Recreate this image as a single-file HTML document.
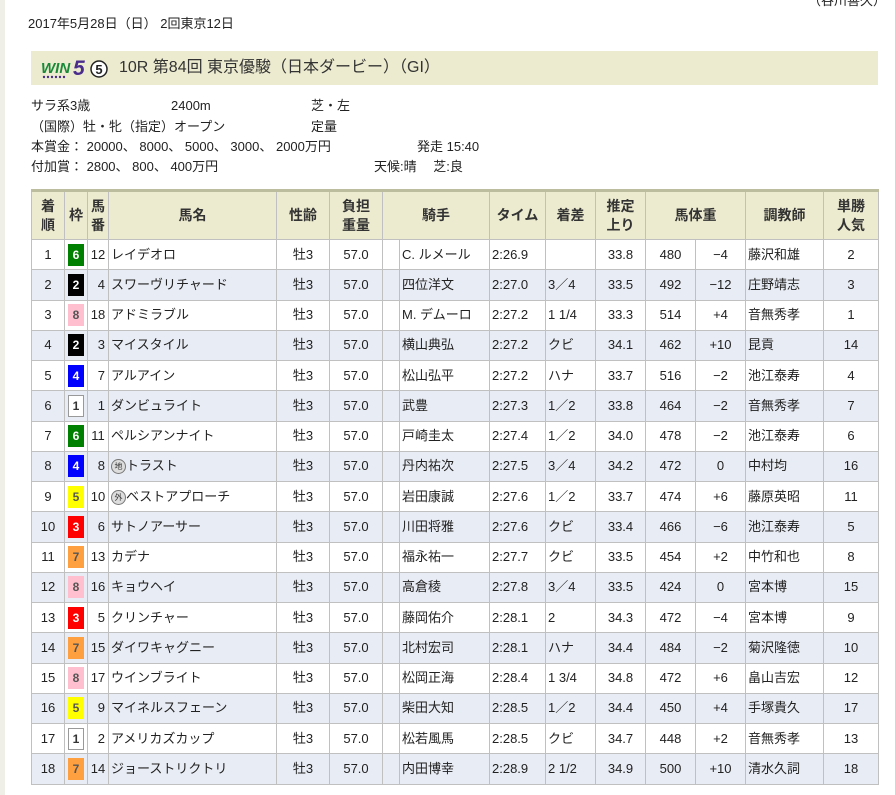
<!DOCTYPE html>
<html><head><meta charset="utf-8">
<style>
body{margin:0;width:895px;height:795px;background:#fff;position:relative;overflow:hidden;font-family:"Liberation Sans","Noto Sans CJK JP",sans-serif;color:#222;font-size:13px}
.strip{position:absolute;left:0;top:0;width:5px;height:795px;background:#efefe7}
.tr{position:absolute;left:808px;top:-8px;font-size:13px;line-height:18px}
.date{position:absolute;left:28px;top:15px;font-size:13px;line-height:18px}
.band{position:absolute;left:31px;top:51px;width:847px;height:34px;background:#ecebcf}
.band .t{position:absolute;left:88px;top:7px;font-size:16px;color:#333;line-height:20px}
.info{position:absolute;font-size:13px;white-space:nowrap;line-height:18px;height:18px}
table{position:absolute;left:31px;top:189px;width:847px;border-collapse:collapse;table-layout:fixed;border-top:3px solid #bcbc9e}
td,th{border:1px solid #c0c0c0;padding:0;font-size:13px;font-weight:normal;text-align:center;white-space:nowrap;overflow:hidden;line-height:16px}
th{background:#ecebcf;font-weight:bold;color:#333;height:47px;line-height:19px;font-size:14px}
tr.r{height:30.25px}
tr.a td{background:#e8ecf4}
td.l{text-align:left;padding-left:2px}
td.rt{text-align:right;padding-right:3px}
.f{display:inline-block;width:16px;height:22px;line-height:22px;font-weight:bold;font-size:12px;color:#fff;vertical-align:middle}
.m{display:inline-block;width:13px;height:13px;border-radius:50%;border:1px solid #777;background:#ddd;font-size:8px;line-height:13px;text-align:center;vertical-align:middle;color:#333}
</style></head><body>
<div class="strip"></div>
<div class="tr">（谷川善久）</div>
<div class="date">2017年5月28日（日） 2回東京12日</div>
<div class="band">
<svg style="position:absolute;left:10px;top:7px" width="80" height="22" viewBox="0 0 80 22">
<text x="0" y="15" font-family="Liberation Sans" font-weight="bold" font-style="italic" font-size="15" fill="#1a8a3a">WIN</text>
<text x="32" y="17" font-family="Liberation Sans" font-weight="bold" font-style="italic" font-size="21" fill="#4a2c8c">5</text>
<g fill="#4a2c8c"><circle cx="3" cy="19" r="1.2"/><circle cx="7" cy="19" r="1.2"/><circle cx="11" cy="19" r="1.2"/><circle cx="15" cy="19" r="1.2"/><circle cx="19" cy="19" r="1.2"/><circle cx="23" cy="19" r="1.2"/></g>
<circle cx="58" cy="11" r="8" fill="#fff" stroke="#222" stroke-width="1.5"/>
<text x="58" y="16" text-anchor="middle" font-family="Liberation Sans" font-weight="bold" font-size="13" fill="#222">5</text>
</svg>
<div class="t">10R 第84回 東京優駿（日本ダービー）（GI）</div>
</div>
<div class="info" style="left:31px;top:97px">サラ系3歳</div>
<div class="info" style="left:171px;top:97px">2400m</div>
<div class="info" style="left:311px;top:97px">芝・左</div>
<div class="info" style="left:31px;top:118px">（国際）牡・牝（指定）オープン</div>
<div class="info" style="left:311px;top:118px">定量</div>
<div class="info" style="left:31px;top:138px">本賞金：  20000、 8000、 5000、 3000、 2000万円</div>
<div class="info" style="left:417px;top:138px">発走 15:40</div>
<div class="info" style="left:31px;top:158px">付加賞：   2800、   800、   400万円</div>
<div class="info" style="left:374px;top:158px">天候:晴　 芝:良</div>
<table>
<colgroup><col style="width:33px"><col style="width:23px"><col style="width:21px"><col style="width:168px"><col style="width:53px"><col style="width:53px"><col style="width:17px"><col style="width:90px"><col style="width:56px"><col style="width:50px"><col style="width:50px"><col style="width:50px"><col style="width:50px"><col style="width:78px"><col style="width:55px"></colgroup>
<tr><th>着<br>順</th><th>枠</th><th>馬<br>番</th><th>馬名</th><th>性齢</th><th>負担<br>重量</th><th colspan="2">騎手</th><th>タイム</th><th>着差</th><th>推定<br>上り</th><th colspan="2">馬体重</th><th>調教師</th><th>単勝<br>人気</th></tr>
<tr class="r"><td>1</td><td><span class="f" style="background:#008000">6</span></td><td>12</td><td class="l">レイデオロ</td><td>牡3</td><td>57.0</td><td></td><td class="l">C. ルメール</td><td class="l">2:26.9</td><td class="l"></td><td>33.8</td><td>480</td><td>−4</td><td class="l">藤沢和雄</td><td>2</td></tr>
<tr class="r a"><td>2</td><td><span class="f" style="background:#000">2</span></td><td class="rt">4</td><td class="l">スワーヴリチャード</td><td>牡3</td><td>57.0</td><td></td><td class="l">四位洋文</td><td class="l">2:27.0</td><td class="l">3／4</td><td>33.5</td><td>492</td><td>−12</td><td class="l">庄野靖志</td><td>3</td></tr>
<tr class="r"><td>3</td><td><span class="f" style="background:#ffbfcf;color:#555">8</span></td><td>18</td><td class="l">アドミラブル</td><td>牡3</td><td>57.0</td><td></td><td class="l">M. デムーロ</td><td class="l">2:27.2</td><td class="l">1 1/4</td><td>33.3</td><td>514</td><td>+4</td><td class="l">音無秀孝</td><td>1</td></tr>
<tr class="r a"><td>4</td><td><span class="f" style="background:#000">2</span></td><td class="rt">3</td><td class="l">マイスタイル</td><td>牡3</td><td>57.0</td><td></td><td class="l">横山典弘</td><td class="l">2:27.2</td><td class="l">クビ</td><td>34.1</td><td>462</td><td>+10</td><td class="l">昆貢</td><td>14</td></tr>
<tr class="r"><td>5</td><td><span class="f" style="background:#0000ff">4</span></td><td class="rt">7</td><td class="l">アルアイン</td><td>牡3</td><td>57.0</td><td></td><td class="l">松山弘平</td><td class="l">2:27.2</td><td class="l">ハナ</td><td>33.7</td><td>516</td><td>−2</td><td class="l">池江泰寿</td><td>4</td></tr>
<tr class="r a"><td>6</td><td><span class="f" style="background:#fff;color:#333;border:1px solid #999;width:14px;height:20px;line-height:20px">1</span></td><td class="rt">1</td><td class="l">ダンビュライト</td><td>牡3</td><td>57.0</td><td></td><td class="l">武豊</td><td class="l">2:27.3</td><td class="l">1／2</td><td>33.8</td><td>464</td><td>−2</td><td class="l">音無秀孝</td><td>7</td></tr>
<tr class="r"><td>7</td><td><span class="f" style="background:#008000">6</span></td><td>11</td><td class="l">ペルシアンナイト</td><td>牡3</td><td>57.0</td><td></td><td class="l">戸崎圭太</td><td class="l">2:27.4</td><td class="l">1／2</td><td>34.0</td><td>478</td><td>−2</td><td class="l">池江泰寿</td><td>6</td></tr>
<tr class="r a"><td>8</td><td><span class="f" style="background:#0000ff">4</span></td><td class="rt">8</td><td class="l"><span class="m">地</span>トラスト</td><td>牡3</td><td>57.0</td><td></td><td class="l">丹内祐次</td><td class="l">2:27.5</td><td class="l">3／4</td><td>34.2</td><td>472</td><td>0</td><td class="l">中村均</td><td>16</td></tr>
<tr class="r"><td>9</td><td><span class="f" style="background:#ffff00;color:#555">5</span></td><td>10</td><td class="l"><span class="m">外</span>ベストアプローチ</td><td>牡3</td><td>57.0</td><td></td><td class="l">岩田康誠</td><td class="l">2:27.6</td><td class="l">1／2</td><td>33.7</td><td>474</td><td>+6</td><td class="l">藤原英昭</td><td>11</td></tr>
<tr class="r a"><td>10</td><td><span class="f" style="background:#ff0000">3</span></td><td class="rt">6</td><td class="l">サトノアーサー</td><td>牡3</td><td>57.0</td><td></td><td class="l">川田将雅</td><td class="l">2:27.6</td><td class="l">クビ</td><td>33.4</td><td>466</td><td>−6</td><td class="l">池江泰寿</td><td>5</td></tr>
<tr class="r"><td>11</td><td><span class="f" style="background:#ffa040;color:#555">7</span></td><td>13</td><td class="l">カデナ</td><td>牡3</td><td>57.0</td><td></td><td class="l">福永祐一</td><td class="l">2:27.7</td><td class="l">クビ</td><td>33.5</td><td>454</td><td>+2</td><td class="l">中竹和也</td><td>8</td></tr>
<tr class="r a"><td>12</td><td><span class="f" style="background:#ffbfcf;color:#555">8</span></td><td>16</td><td class="l">キョウヘイ</td><td>牡3</td><td>57.0</td><td></td><td class="l">高倉稜</td><td class="l">2:27.8</td><td class="l">3／4</td><td>33.5</td><td>424</td><td>0</td><td class="l">宮本博</td><td>15</td></tr>
<tr class="r"><td>13</td><td><span class="f" style="background:#ff0000">3</span></td><td class="rt">5</td><td class="l">クリンチャー</td><td>牡3</td><td>57.0</td><td></td><td class="l">藤岡佑介</td><td class="l">2:28.1</td><td class="l">2</td><td>34.3</td><td>472</td><td>−4</td><td class="l">宮本博</td><td>9</td></tr>
<tr class="r a"><td>14</td><td><span class="f" style="background:#ffa040;color:#555">7</span></td><td>15</td><td class="l">ダイワキャグニー</td><td>牡3</td><td>57.0</td><td></td><td class="l">北村宏司</td><td class="l">2:28.1</td><td class="l">ハナ</td><td>34.4</td><td>484</td><td>−2</td><td class="l">菊沢隆徳</td><td>10</td></tr>
<tr class="r"><td>15</td><td><span class="f" style="background:#ffbfcf;color:#555">8</span></td><td>17</td><td class="l">ウインブライト</td><td>牡3</td><td>57.0</td><td></td><td class="l">松岡正海</td><td class="l">2:28.4</td><td class="l">1 3/4</td><td>34.8</td><td>472</td><td>+6</td><td class="l">畠山吉宏</td><td>12</td></tr>
<tr class="r a"><td>16</td><td><span class="f" style="background:#ffff00;color:#555">5</span></td><td class="rt">9</td><td class="l">マイネルスフェーン</td><td>牡3</td><td>57.0</td><td></td><td class="l">柴田大知</td><td class="l">2:28.5</td><td class="l">1／2</td><td>34.4</td><td>450</td><td>+4</td><td class="l">手塚貴久</td><td>17</td></tr>
<tr class="r"><td>17</td><td><span class="f" style="background:#fff;color:#333;border:1px solid #999;width:14px;height:20px;line-height:20px">1</span></td><td class="rt">2</td><td class="l">アメリカズカップ</td><td>牡3</td><td>57.0</td><td></td><td class="l">松若風馬</td><td class="l">2:28.5</td><td class="l">クビ</td><td>34.7</td><td>448</td><td>+2</td><td class="l">音無秀孝</td><td>13</td></tr>
<tr class="r a"><td>18</td><td><span class="f" style="background:#ffa040;color:#555">7</span></td><td>14</td><td class="l">ジョーストリクトリ</td><td>牡3</td><td>57.0</td><td></td><td class="l">内田博幸</td><td class="l">2:28.9</td><td class="l">2 1/2</td><td>34.9</td><td>500</td><td>+10</td><td class="l">清水久詞</td><td>18</td></tr>
</table>
</body></html>
